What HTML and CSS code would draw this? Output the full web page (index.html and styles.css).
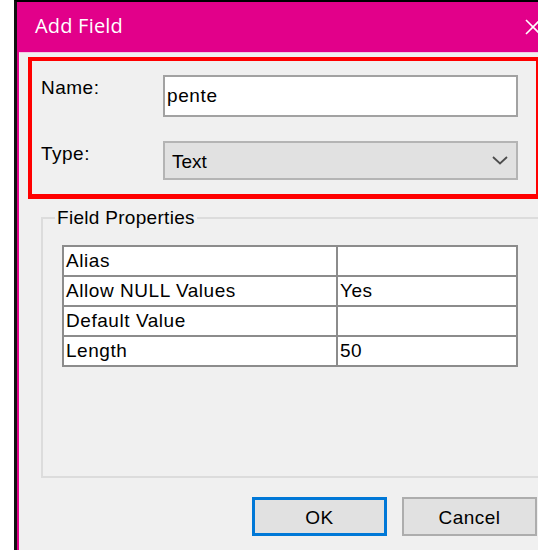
FILE: index.html
```html
<!DOCTYPE html>
<html lang="en">
<head>
<meta charset="utf-8">
<title>Add Field</title>
<link rel="stylesheet" href="styles.css">
</head>
<body>
<div class="window">
  <div class="frame">
    <div class="titlebar">
      <span class="title">Add Field</span>
      <svg class="close" width="16" height="16" viewBox="0 0 16 16">
        <path d="M1 1 L15 15 M15 1 L1 15" stroke="#fff" stroke-width="1.6" fill="none"/>
      </svg>
    </div>
    <div class="content">
      <div class="highlight">
        <div class="form">
          <label class="lbl" for="name">Name:</label>
          <div class="input" id="name">pente</div>
          <label class="lbl" for="type">Type:</label>
          <div class="select" id="type">
            <span class="select-text">Text</span>
            <svg class="chev" width="16" height="9" viewBox="0 0 16 9">
              <path d="M1 1 L8 7.5 L15 1" stroke="#4d4d4d" stroke-width="1.8" fill="none"/>
            </svg>
          </div>
        </div>
      </div>
      <fieldset class="group">
        <legend class="legend">Field Properties</legend>
        <table class="props">
          <tr><td class="key">Alias</td><td class="val"></td></tr>
          <tr><td class="key">Allow NULL Values</td><td class="val">Yes</td></tr>
          <tr><td class="key">Default Value</td><td class="val"></td></tr>
          <tr><td class="key">Length</td><td class="val">50</td></tr>
        </table>
      </fieldset>
      <div class="buttons">
        <button class="btn btn-default">OK</button>
        <button class="btn">Cancel</button>
      </div>
    </div>
  </div>
</div>
</body>
</html>
```

FILE: styles.css
```css
html, body {
  margin: 0;
  padding: 0;
  background: #ffffff;
  overflow: hidden;
  height: 550px;
}

.window {
  margin-left: 14px;
  width: 530px;
  height: 548px;
  border-top: 2px solid #000;
  border-left: 3px solid #111;
}

.frame {
  height: 100%;
  border-left: 2px solid #e2008a;
  background: #f0f0f0;
  display: flex;
  flex-direction: column;
}

.titlebar {
  height: 51px;
  background: #e2008a;
  display: flex;
  align-items: center;
  justify-content: space-between;
  padding: 0 6px 4px 16px;
  box-sizing: border-box;
  border-bottom: 1px solid #f4c9e2;
}

.title {
  font-family: "Open Sans", "Noto Sans", sans-serif;
  font-size: 20px;
  color: #ffffff;
  letter-spacing: 0.2px;
}

.close {
  display: block;
  margin-top: 4px;
}

.content {
  flex: 1;
  padding: 4px 0 0 9px;
  font-family: "Liberation Sans", Arial, sans-serif;
  font-size: 19px;
  color: #000;
}

.highlight {
  width: 512px;
  box-sizing: border-box;
  border: 4px solid #ff0000;
  border-bottom-width: 5px;
  padding: 14px 0 14px 9px;
}

.form {
  display: grid;
  grid-template-columns: 122px 355px;
  grid-template-rows: 42px 39px;
  row-gap: 24px;
}

.lbl {
  line-height: 22px;
  margin-top: 2px;
  letter-spacing: 0.5px;
}

.input {
  box-sizing: border-box;
  border: 2px solid #a2a2a2;
  background: #ffffff;
  padding-left: 2px;
  display: flex;
  align-items: center;
  letter-spacing: 0.6px;
}

.select {
  box-sizing: border-box;
  border: 2px solid #b4b4b4;
  background: #e1e1e1;
  display: flex;
  align-items: center;
  justify-content: space-between;
  padding: 3px 8px 0 7px;
}

.chev {
  display: block;
  margin-top: -3px;
}

.group {
  margin: 8px 0 0 13px;
  width: 520px;
  height: 271px;
  box-sizing: border-box;
  border: 2px solid #dcdcdc;
  padding: 16px 0 0 19px;
  min-width: 0;
}

.legend {
  padding: 0 2px;
  margin-left: -7px;
  line-height: 22px;
  font-size: 19px;
  letter-spacing: 0.3px;
}

.props {
  border-collapse: collapse;
  background: #ffffff;
  width: 456px;
}

.props td {
  border: 2px solid #8c8c8c;
  height: 27px;
  padding: 0 2px 1px 2px;
  line-height: 22px;
  letter-spacing: 0.55px;
  white-space: nowrap;
}

.props .key {
  width: 268px;
}

.buttons {
  display: flex;
  gap: 15px;
  margin: 19px 0 0 224px;
}

.btn {
  width: 135px;
  height: 39px;
  box-sizing: border-box;
  border: 2px solid #adadad;
  background: #e1e1e1;
  font-family: "Liberation Sans", Arial, sans-serif;
  font-size: 19px;
  color: #000;
  padding: 3px 0 0;
  letter-spacing: 0.5px;
}

.btn-default {
  border: 3px solid #0078d7;
}
```
